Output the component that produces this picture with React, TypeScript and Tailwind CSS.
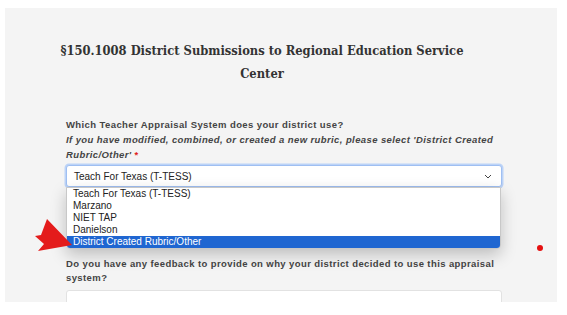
export default function App() {
  const options = ["Teach For Texas (T-TESS)", "Marzano", "NIET TAP", "Danielson"];

  return (
    <div className="w-[567px] h-[315px] bg-white pt-[8px] pl-[5px]">
      <div className="relative w-[552px] h-[294px] bg-[#f4f4f4] overflow-hidden">
        <div className="pt-[31px] pl-[52px] w-[462px] text-center">
          <h1 className="text-[12.8px] leading-[23px] font-bold text-[#333] font-['DejaVu_Serif',serif] font-stretch-condensed">
            §150.1008 District Submissions to Regional Education Service Center
          </h1>
        </div>

        <div className="mt-[32px] ml-[61px] w-[436px] font-['Liberation_Sans',Arial,sans-serif]">
          <p className="text-[9.5px] leading-[15px] font-bold text-[#444] tracking-[0.4px]">
            Which Teacher Appraisal System does your district use?
          </p>
          <p className="text-[9.5px] leading-[15px] font-bold italic text-[#444] tracking-[0.4px]">
            If you have modified, combined, or created a new rubric, please select 'District Created Rubric/Other'
            <span className="ml-[3px] text-[#e02020] not-italic">*</span>
          </p>

          <div className="relative mt-[3px]">
            <div className="h-[22px] bg-white border border-[#9fbff2] rounded-[3px] shadow-[0_0_0_1.5px_#bcd3f7] flex items-center justify-between pl-[7px] pr-[9px]">
              <span className="text-[10px] text-[#222]">Teach For Texas (T-TESS)</span>
              <svg width="8" height="5" viewBox="0 0 8 5" className="text-[#444]">
                <path d="M1 1l3 3 3-3" fill="none" stroke="currentColor" strokeWidth="1" />
              </svg>
            </div>

            <div className="absolute left-0 top-[22px] w-[435px] bg-white border border-[#c8c8c8] rounded-b-[4px] shadow-[0_6px_16px_rgba(0,0,0,0.22)] overflow-hidden z-10">
              {options.map((o) => (
                <div key={o} className="h-[12px] leading-[12px] pl-[6px] text-[10px] text-[#222]">
                  {o}
                </div>
              ))}
              <div className="h-[12px] leading-[12px] pl-[6px] text-[10px] text-white bg-[#1f66d1]">
                District Created Rubric/Other
              </div>
            </div>
          </div>

          <p className="mt-[70px] text-[9.5px] leading-[14px] font-bold text-[#444] tracking-[0.4px]">
            Do you have any feedback to provide on why your district decided to use this appraisal system?
          </p>
          <div className="mt-[5px] h-[40px] bg-white border border-[#e2e2e2] rounded-[3px]" />
        </div>

        <div className="absolute left-[532px] top-[237px] w-[6px] h-[6px] rounded-full bg-[#e51010]" />

        <svg className="absolute left-[25px] top-[200px] z-20" width="50" height="48" viewBox="0 0 50 48">
          <polygon points="17,11 42,37 8,43 14,36 5,28 11,27" fill="#e41b1b" />
        </svg>
      </div>
    </div>
  );
}
